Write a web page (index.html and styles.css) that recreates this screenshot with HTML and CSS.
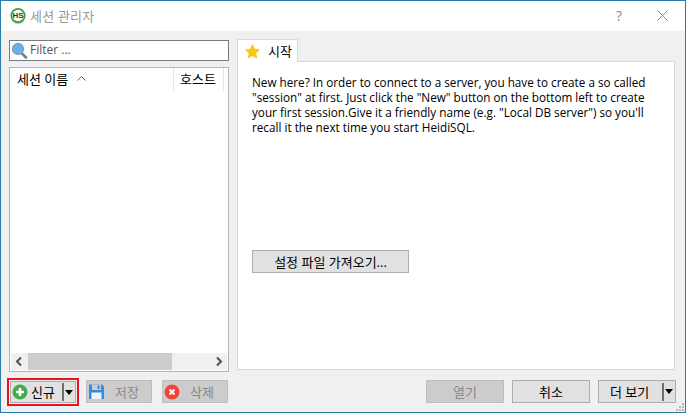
FILE: index.html
```html
<!DOCTYPE html>
<html lang="ko">
<head>
<meta charset="utf-8">
<title>세션 관리자</title>
<link rel="stylesheet" href="styles.css">
</head>
<body>
<div class="window">
  <header class="titlebar">
    <svg class="app-icon" width="16" height="16" viewBox="0 0 16 16">
      <circle cx="8" cy="8.500" r="7.500" fill="#b9c0b4"/>
      <circle cx="8" cy="7.500" r="7.500" fill="#3f9e3a"/>
      <circle cx="8" cy="7.500" r="5.800" fill="#fff"/>
      <text x="8" y="10.300" class="app-icon-text">HS</text>
    </svg>
    <span class="title">세션 관리자</span>
    <span class="spacer"></span>
    <span class="help">?</span>
    <svg class="close" width="11" height="11" viewBox="0 0 11 11"><path d="M.5.5l10 10M10.500.5l-10 10" stroke="#8a8a8a" fill="none"/></svg>
  </header>
  <div class="main">
    <aside class="left">
      <div class="filter">
        <svg width="17" height="17" viewBox="0 0 17 17">
          <path d="M10.500 11l4.500 4.500" stroke="#6d7f92" stroke-width="2.500" stroke-linecap="round"/>
          <circle cx="7" cy="7" r="5.500" fill="#62b2f4" stroke="#8b9baa" stroke-width="1.300"/>
        </svg>
        <span class="filter-text">Filter ...</span>
      </div>
      <div class="list">
        <div class="list-head">
          <div class="col col-name">세션 이름<svg class="sort" width="9" height="5" viewBox="0 0 9 5"><path d="M.5 4.500l4-4 4 4" stroke="#666" fill="none"/></svg></div>
          <div class="col col-host">호스트</div>
        </div>
        <div class="list-body"></div>
        <div class="hscroll">
          <svg width="17" height="17" viewBox="0 0 17 17"><path d="M10 4.500l-4 4 4 4" stroke="#505050" stroke-width="2" fill="none"/></svg>
          <div class="hscroll-track"><div class="hscroll-thumb"></div></div>
          <svg width="17" height="17" viewBox="0 0 17 17"><path d="M7 4.500l4 4-4 4" stroke="#505050" stroke-width="2" fill="none"/></svg>
        </div>
      </div>
    </aside>
    <section class="right">
      <div class="tabs">
        <div class="tab">
          <svg width="17" height="17" viewBox="0 0 16 16"><path d="M8 .8l2.200 4.700 5.100.6-3.800 3.500 1 5.100L8 12.200 3.500 14.700l1-5.100L.7 6.100l5.100-.6z" fill="#fcc419"/></svg>
          <span class="tab-label">시작</span>
        </div>
      </div>
      <div class="panel">
        <p class="intro">New here? In order to connect to a server, you have to create a so called "session" at first. Just click the "New" button on the bottom left to create your first session.Give it a friendly name (e.g. "Local DB server") so you'll recall it the next time you start HeidiSQL.</p>
        <button class="btn import">설정 파일 가져오기...</button>
      </div>
    </section>
  </div>
  <footer class="footer">
    <div class="highlight">
      <button class="btn btn-new">
        <svg width="16" height="16" viewBox="0 0 16 16"><circle cx="8" cy="8" r="7.500" fill="#3fae49"/><path d="M8 4v8M4 8h8" stroke="#fff" stroke-width="2.600"/></svg>
        <span class="btn-label">신규</span>
        <span class="split"></span><span class="arrow"></span>
      </button>
    </div>
    <button class="btn btn-icon disabled btn-save">
      <svg width="17" height="17" viewBox="0 0 17 17"><path d="M1 1.500h13l2 2v12.500H1z" fill="#2f8fe0"/><rect x="4" y="1.500" width="9" height="5.500" fill="#c9ced3"/><rect x="9.500" y="2.500" width="2" height="3.500" fill="#5f7f9c"/><rect x="3.500" y="9.500" width="10" height="6.500" fill="#eef4fa"/></svg>
      <span>저장</span>
    </button>
    <button class="btn btn-icon disabled btn-del">
      <svg width="16" height="16" viewBox="0 0 16 16"><circle cx="8" cy="8" r="7.500" fill="#f0443a"/><path d="M5.500 5.500l5 5M10.500 5.500l-5 5" stroke="#fff" stroke-width="2"/></svg>
      <span>삭제</span>
    </button>
    <span class="spacer"></span>
    <button class="btn btn-wide disabled">열기</button>
    <button class="btn btn-wide">취소</button>
    <button class="btn btn-more">
      <span class="btn-label">더 보기</span>
      <span class="split"></span><span class="arrow"></span>
    </button>
  </footer>
  <svg class="grip" width="10" height="10" viewBox="0 0 10 10"><path d="M7 1h2v2H7zM4 4h2v2H4zM7 4h2v2H7zM1 7h2v2H1zM4 7h2v2H4zM7 7h2v2H7z" fill="#b8b8b8"/></svg>
</div>
</body>
</html>
```
FILE: styles.css
```css
* { box-sizing: border-box; }
html, body { margin: 0; padding: 0; }
body {
  width: 686px;
  height: 413px;
  overflow: hidden;
  font-family: "Open Sans", "Noto Sans CJK KR", sans-serif;
  font-size: 13px;
  color: #000;
}
.window {
  position: relative;
  width: 686px;
  height: 413px;
  border: 1px solid #2a7dab;
  background: #f0f0f0;
  display: flex;
  flex-direction: column;
}
.titlebar {
  height: 30px;
  flex: none;
  background: #fff;
  display: flex;
  align-items: center;
  padding: 0 17px 2px 9px;
}
.app-icon { margin: 1px 4px 0 0; }
.app-icon-text { font: bold 8px "Liberation Sans", sans-serif; fill: #1f3f1d; text-anchor: middle; }
.title { color: #999; letter-spacing: .2px; }
.spacer { flex: 1; }
.help { color: #888; font-size: 14px; margin-right: 35px; }
.main {
  flex: 1;
  min-height: 0;
  display: flex;
  gap: 8px;
  padding: 8px 10px 0 8px;
}
.left {
  width: 220px;
  flex: none;
  display: flex;
  flex-direction: column;
  gap: 6px;
  padding-top: 1px;
}
.filter {
  height: 21px;
  flex: none;
  background: #fff;
  border: 1px solid #7a7a7a;
  display: flex;
  align-items: center;
  padding-left: 1px;
  gap: 2px;
  font-size: 12px;
}
.filter-text { color: #555; margin-bottom: 2px; }
.list {
  height: 305px;
  flex: none;
  background: #fff;
  border: 1px solid #b4b4b4;
  display: flex;
  flex-direction: column;
}
.list-head { height: 24px; flex: none; display: flex; }
.col { height: 23px; display: flex; align-items: center; padding-bottom: 2px; }
.col-name { width: 164px; padding-left: 7px; border-right: 1px solid #e5e5e5; }
.sort { margin-left: 9px; }
.col-host { width: 50px; padding-left: 6px; border-right: 1px solid #e5e5e5; }
.list-body { flex: 1; }
.hscroll { height: 17px; flex: none; display: flex; margin: 0 1px 1px; background: #f0f0f0; }
.hscroll-track { flex: 1; }
.hscroll-thumb { width: 144px; height: 17px; background: #cdcdcd; }
.right { flex: 1; min-width: 0; display: flex; flex-direction: column; }
.tabs { height: 23px; flex: none; display: flex; margin-bottom: -1px; position: relative; z-index: 1; }
.tab {
  width: 61px;
  height: 23px;
  background: #fff;
  border: 1px solid #d9d9d9;
  border-bottom: none;
  display: flex;
  align-items: center;
  padding-left: 6px;
  gap: 7px;
}
.tab-label { margin-bottom: 2px; }
.panel {
  height: 309px;
  background: #fff;
  border: 1px solid #d9d9d9;
  padding: 13px 14px;
}
.intro { margin: 0 0 115px; line-height: 15px; height: 60px; font-size: 11.730px; }
.btn {
  font: inherit;
  color: #000;
  background: #e1e1e1;
  border: 1px solid #adadad;
  height: 23px;
  padding: 0 0 1px;
  display: flex;
  align-items: center;
  justify-content: center;
}
.btn svg { margin-top: 1px; }
.import { width: 157px; }
.footer {
  height: 40px;
  flex: none;
  display: flex;
  align-items: flex-start;
  padding: 7px 9px 0 6px;
  position: relative;
}
.highlight { border: 2px solid #e81123; padding: 1px; margin-right: 7px; margin-top: -1px; }
.btn-new { width: 66px; height: 22px; justify-content: flex-start; padding-left: 1px; }
.btn-label { margin-left: 3px; }
.split { width: 2px; height: 18px; background: #6e6e6e; margin-left: auto; margin-top: 1px; }
.arrow { width: 0; height: 0; border: 4.500px solid transparent; border-top: 5px solid #000; border-bottom: 0; margin: 1px 2px 0 1px; }
.btn-icon { margin-top: 1px; justify-content: flex-start; padding-left: 1px; gap: 10px; }
.btn-save { width: 66px; margin-right: 10px; }
.btn-del { width: 66px; gap: 10px; }
.disabled { background: #cccccc; color: #888; border-color: #bfbfbf; }
.btn-wide { width: 78px; margin-right: 8px; margin-top: 1px; }
.btn-more { width: 78px; padding-left: 0; margin-top: 1px; justify-content: flex-start; }
.btn-more .btn-label { margin-left: 11px; }
.grip { position: absolute; right: 0; bottom: 0; }
```
